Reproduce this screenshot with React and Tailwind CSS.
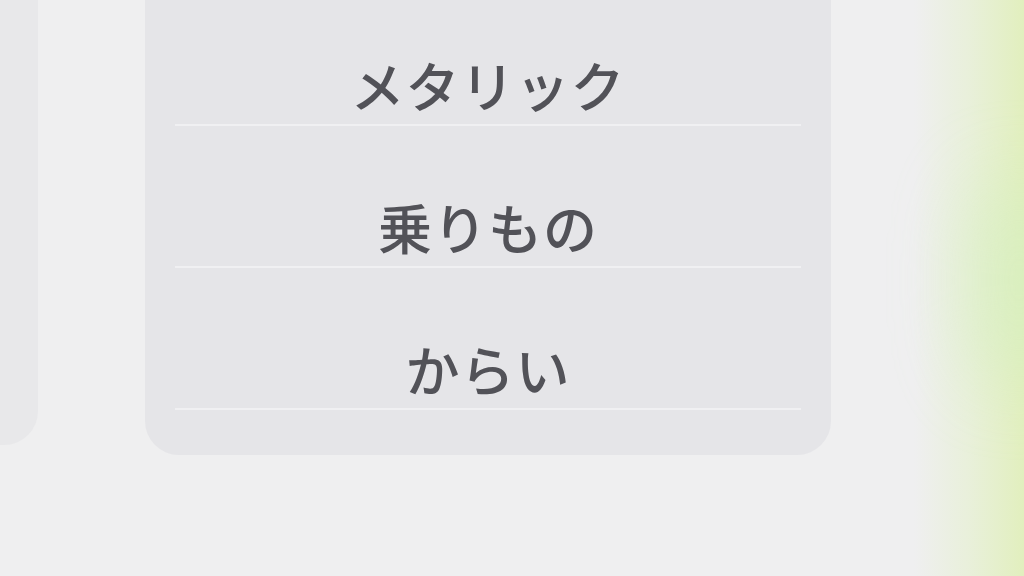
const ITEMS = ['メタリック', '乗りもの', 'からい']

export default function App() {
  return (
    <div
      className="relative w-[1024px] h-[576px] overflow-hidden bg-[#efeff0]"
      style={{ fontFamily: '"Noto Sans CJK JP", "Noto Sans", sans-serif' }}
    >
      {/* right green glow */}
      <div className="pointer-events-none absolute right-0 top-0 h-full w-[110px] bg-gradient-to-l from-[#e0efb8] via-[#e8f0d8] to-transparent opacity-90" />
      <div className="pointer-events-none absolute -right-10 top-[180px] h-[200px] w-[90px] rounded-full bg-[#d4efbe] blur-2xl opacity-70" />

      <div className="flex h-full">
        {/* left neighbouring panel */}
        <div className="w-[38px] h-[445px] shrink-0 rounded-br-[34px] bg-[#e8e8ea]" />

        {/* list panel */}
        <div className="ml-[107px] w-[686px] h-[455px] shrink-0 rounded-b-[34px] bg-[#e5e5e8] px-[30px]">
          {ITEMS.map((label, i) => (
            <div key={label} className="flex flex-col">
              <div className={`${i === 0 ? 'h-[124px]' : 'h-[140px]'} flex items-end justify-center pb-[12px]`}>
                <span className="text-[54px] font-medium leading-none text-[#525258] tracking-[1px]">{label}</span>
              </div>
              <div className="h-[2px] bg-[#f0f0f2]" />
            </div>
          ))}
        </div>
      </div>
    </div>
  )
}
